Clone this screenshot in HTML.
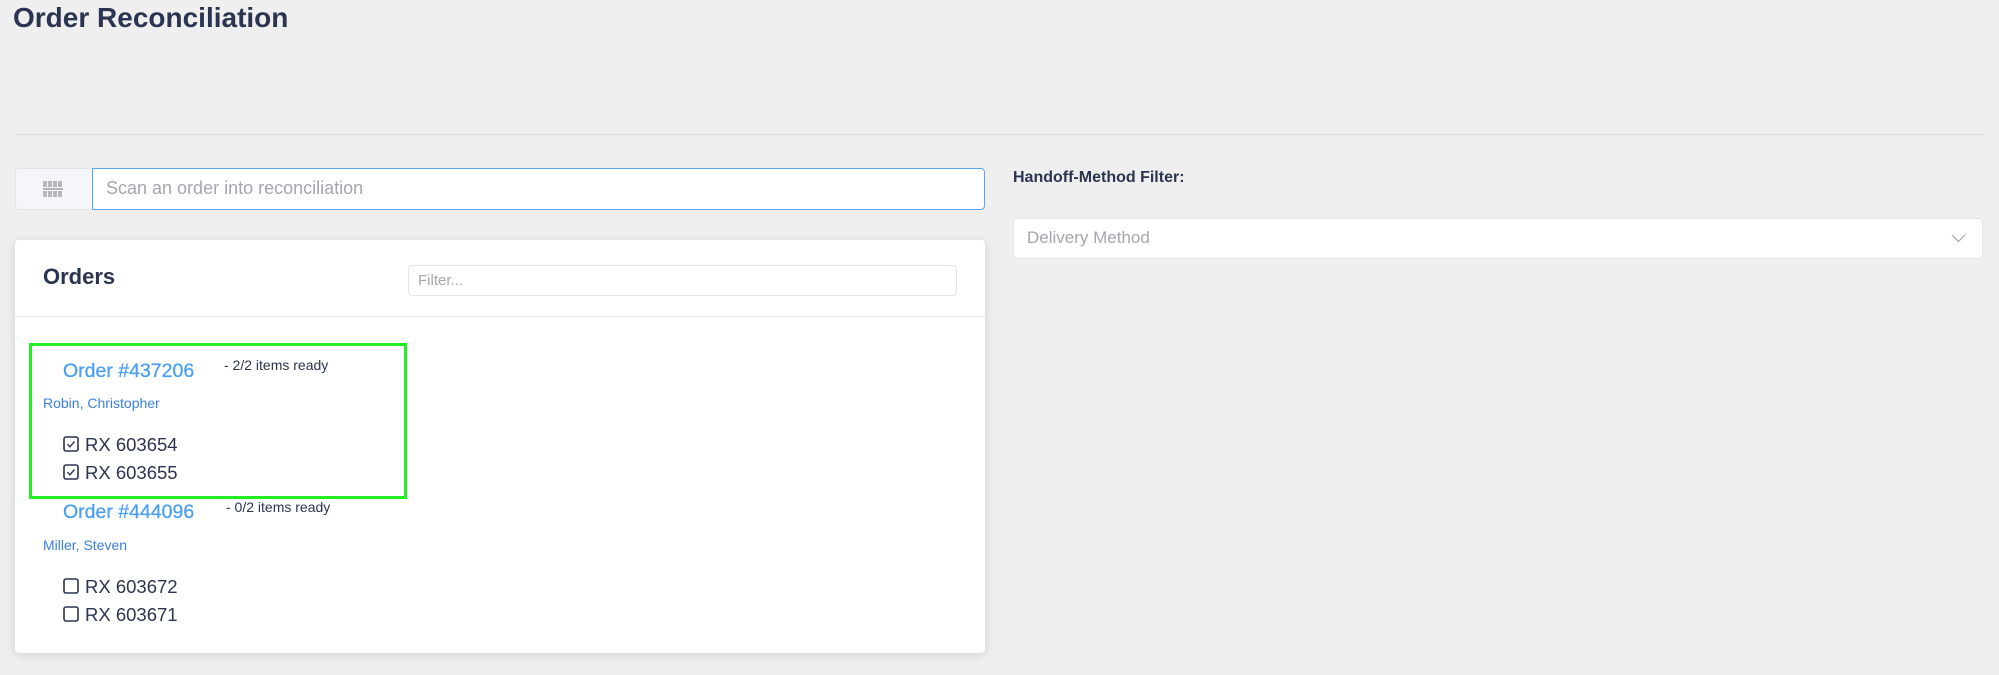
<!DOCTYPE html>
<html><head><meta charset="utf-8"><style>
*{box-sizing:border-box;margin:0;padding:0}
body{width:1999px;height:675px;background:#efefef;font-family:"Liberation Sans",Arial,sans-serif;position:relative;overflow:hidden;color:#2b3450}
.a{position:absolute;white-space:nowrap}
</style></head><body>
<div class="a" style="left:13px;top:2px;font-size:28px;font-weight:bold;color:#2b3450">Order Reconciliation</div>
<div class="a" style="left:15px;top:134px;width:1968px;height:1px;background:#dcdde2"></div>

<div class="a" style="left:15px;top:168px;width:78px;height:42px;background:#f5f6f9;border:1px solid #e2e4ea;border-radius:4px 0 0 4px"></div>
<svg class="a" style="left:42px;top:180px" width="22" height="18" viewBox="0 0 22 18">
<g stroke="#8a8d96" stroke-width="1.2">
<path d="M2 1v6M4 1v6M7 1v6M9 1v6M12 1v6M14 1v6M17 1v6M19 1v6"/>
<path d="M1 9h20"/>
<path d="M2 11v6M4 11v6M7 11v6M9 11v6M12 11v6M14 11v6M17 11v6M19 11v6"/>
</g></svg>
<div class="a" style="left:92px;top:168px;width:893px;height:42px;background:#fff;border:1.5px solid #5aa6f5;border-radius:0 4px 4px 0"></div>
<div class="a" style="left:106px;top:178px;font-size:18px;color:#a3a6ad">Scan an order into reconciliation</div>

<div class="a" style="left:1013px;top:169px;font-size:16px;font-weight:bold;color:#2b3450">Handoff-Method Filter:</div>
<div class="a" style="left:1013px;top:218px;width:970px;height:41px;background:#fff;border:1px solid #e2e4ea;border-radius:4px"></div>
<div class="a" style="left:1027px;top:228px;font-size:17px;color:#a3a6ad">Delivery Method</div>
<svg class="a" style="left:1951px;top:234px" width="15" height="9" viewBox="0 0 15 9"><path d="M1 1l6.5 6.5L14 1" fill="none" stroke="#a3a6ad" stroke-width="1.2"/></svg>

<div class="a" style="left:15px;top:240px;width:970px;height:413px;background:#fff;border-radius:4px;box-shadow:0 2px 10px rgba(0,0,0,.12)"></div>
<div class="a" style="left:43px;top:264px;font-size:22px;font-weight:bold;color:#2b3450">Orders</div>
<div class="a" style="left:408px;top:265px;width:549px;height:31px;border:1.5px solid #e2e4ea;border-radius:4px;background:#fff"></div>
<div class="a" style="left:418px;top:272px;font-size:15px;color:#a3a6ad">Filter...</div>
<div class="a" style="left:15px;top:316px;width:970px;height:1px;background:#e6e7eb"></div>

<div class="a" style="left:29px;top:343px;width:378px;height:156px;border:3px solid #22ee22"></div>

<div class="a" style="left:63px;top:360px;font-size:19.5px;color:#4a9ff5;-webkit-text-stroke:0.3px #4a9ff5">Order #437206</div>
<div class="a" style="left:224px;top:357px;font-size:14px;color:#2b3450">- 2/2 items ready</div>
<div class="a" style="left:43px;top:395px;font-size:14px;color:#3b7fe0">Robin, Christopher</div>
<svg class="a" style="left:63px;top:436px" width="16" height="16" viewBox="0 0 16 16"><rect x="1" y="1" width="14" height="14" rx="2" fill="none" stroke="#2b3450" stroke-width="1.6"/><path d="M4.5 8.2l2.4 2.6 4.6-5.4" fill="none" stroke="#2b3450" stroke-width="1.4"/></svg>
<div class="a" style="left:85px;top:434px;font-size:18.5px;color:#2b3450">RX 603654</div>
<svg class="a" style="left:63px;top:464px" width="16" height="16" viewBox="0 0 16 16"><rect x="1" y="1" width="14" height="14" rx="2" fill="none" stroke="#2b3450" stroke-width="1.6"/><path d="M4.5 8.2l2.4 2.6 4.6-5.4" fill="none" stroke="#2b3450" stroke-width="1.4"/></svg>
<div class="a" style="left:85px;top:462px;font-size:18.5px;color:#2b3450">RX 603655</div>

<div class="a" style="left:63px;top:501px;font-size:19.5px;color:#4a9ff5;-webkit-text-stroke:0.3px #4a9ff5">Order #444096</div>
<div class="a" style="left:226px;top:499px;font-size:14px;color:#2b3450">- 0/2 items ready</div>
<div class="a" style="left:43px;top:537px;font-size:14px;color:#3b7fe0">Miller, Steven</div>
<svg class="a" style="left:63px;top:578px" width="16" height="16" viewBox="0 0 16 16"><rect x="1" y="1" width="14" height="14" rx="2" fill="none" stroke="#2b3450" stroke-width="1.6"/></svg>
<div class="a" style="left:85px;top:576px;font-size:18.5px;color:#2b3450">RX 603672</div>
<svg class="a" style="left:63px;top:606px" width="16" height="16" viewBox="0 0 16 16"><rect x="1" y="1" width="14" height="14" rx="2" fill="none" stroke="#2b3450" stroke-width="1.6"/></svg>
<div class="a" style="left:85px;top:604px;font-size:18.5px;color:#2b3450">RX 603671</div>
</body></html>
